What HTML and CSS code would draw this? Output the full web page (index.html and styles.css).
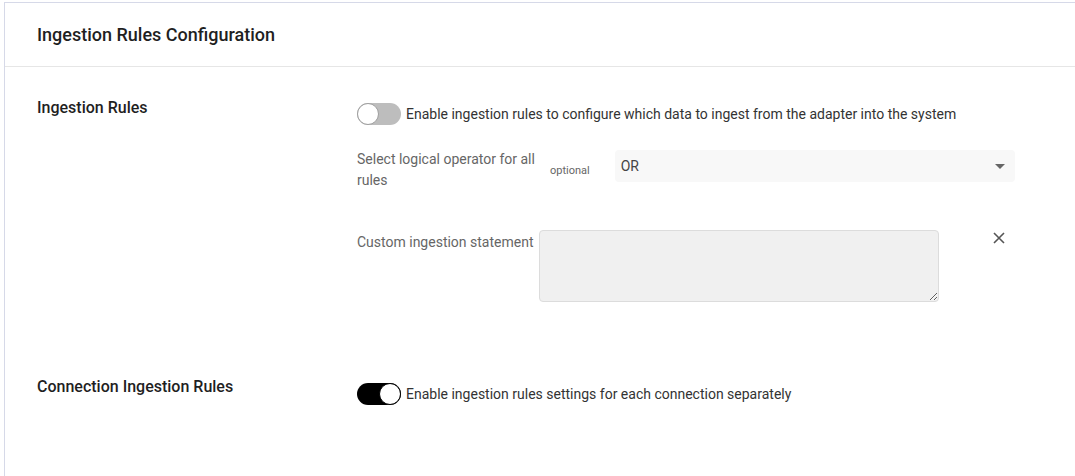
FILE: index.html
```html
<!DOCTYPE html>
<html lang="en">
<head>
<meta charset="utf-8">
<title>Ingestion Rules Configuration</title>
<link rel="stylesheet" href="styles.css">
</head>
<body>
<div class="page">
  <section class="card">
    <header class="card-header">
      <h2 class="card-title">Ingestion Rules Configuration</h2>
    </header>
    <div class="card-body">
      <div class="setting">
        <div class="setting-label">Ingestion Rules</div>
        <div class="setting-content">
          <label class="toggle-row">
            <span class="toggle"><span class="knob"></span></span>
            <span class="toggle-text">Enable ingestion rules to configure which data to ingest from the adapter into the system</span>
          </label>
          <div class="select-row">
            <span class="field-label select-label">Select logical operator for all rules</span>
            <span class="optional">optional</span>
            <div class="select">
              <span class="select-value">OR</span>
              <span class="caret"></span>
            </div>
          </div>
          <div class="custom-row">
            <span class="field-label custom-label">Custom ingestion statement</span>
            <textarea class="statement"></textarea>
            <button class="remove" type="button" aria-label="Remove">
              <svg width="12" height="12" viewBox="0 0 12 12"><path d="M1 1 L11 11 M11 1 L1 11" stroke="#555" stroke-width="1.6" fill="none"/></svg>
            </button>
          </div>
        </div>
      </div>
      <div class="setting setting-connection">
        <div class="setting-label">Connection Ingestion Rules</div>
        <div class="setting-content">
          <label class="toggle-row">
            <span class="toggle toggle-on"><span class="knob"></span></span>
            <span class="toggle-text">Enable ingestion rules settings for each connection separately</span>
          </label>
        </div>
      </div>
    </div>
  </section>
</div>
</body>
</html>
```

FILE: styles.css
```css
* { box-sizing: border-box; }
html, body { margin: 0; padding: 0; background: #fff; }
body { font-family: Roboto, "Noto Sans", sans-serif; color: #222; }

.page { padding: 2px 0 0 4px; height: 476px; overflow: hidden; }

.card {
  border-top: 1px solid #d6d9e8;
  border-left: 1px solid #d6d9e8;
  min-height: 474px;
  background: #fff;
}

.card-header {
  height: 64px;
  display: flex;
  align-items: center;
  padding-left: 32px;
  border-bottom: 1px solid #e6e6e6;
}
.card-title {
  margin: 0;
  font-size: 18px;
  font-weight: 500;
  color: #1f1f1f;
}

.card-body { padding: 29px 32px 0 32px; }

.setting {
  display: grid;
  grid-template-columns: 320px 1fr;
}
.setting-connection { margin-top: 73px; }

.setting-label {
  font-size: 16px;
  line-height: 24px;
  font-weight: 500;
  color: #1f1f1f;
}
.setting-content { padding-top: 7px; }
.setting-connection .setting-content { padding-top: 8px; }

.toggle-row {
  display: flex;
  align-items: center;
  height: 22px;
}
.toggle {
  position: relative;
  width: 44px;
  height: 22px;
  border-radius: 11px;
  background: #bdbdbd;
  flex: none;
}
.knob {
  position: absolute;
  top: 0;
  left: 0;
  width: 22px;
  height: 22px;
  border-radius: 50%;
  background: #fff;
  border: 1.5px solid #9e9e9e;
}
.toggle-on { background: #000; }
.toggle-on .knob { left: 22px; border-color: #000; }
.toggle-text {
  margin-left: 5px;
  font-size: 14px;
  color: #333;
}

.select-row {
  display: flex;
  align-items: flex-start;
  margin-top: 22px;
}
.field-label {
  font-size: 14px;
  line-height: 21px;
  color: #666;
}
.select-label { width: 190px; flex: none; margin-top: 2px; }
.optional {
  margin-left: 3px;
  margin-top: 17px;
  font-size: 11px;
  line-height: 13px;
  color: #666;
  flex: none;
}
.select {
  margin-left: 25px;
  margin-top: 3px;
  width: 400px;
  height: 32px;
  border-radius: 4px;
  background: #f8f8f8;
  display: flex;
  align-items: center;
  justify-content: space-between;
  padding: 0 10px 0 6px;
  flex: none;
}
.select-value { font-size: 14px; color: #444; }
.caret {
  width: 0;
  height: 0;
  border-left: 5px solid transparent;
  border-right: 5px solid transparent;
  border-top: 5px solid #666;
}

.custom-row {
  display: flex;
  align-items: flex-start;
  margin-top: 39px;
}
.custom-label { margin-top: 2px; }
.statement {
  margin: 0 0 0 5px;
  width: 400px;
  height: 72px;
  background: #f0f0f0;
  border: 1px solid #dcdcdc;
  border-radius: 4px;
  font-family: inherit;
  font-size: 14px;
  flex: none;
}
.remove {
  margin-left: 53px;
  margin-top: 1px;
  width: 14px;
  height: 14px;
  padding: 1px;
  border: 0;
  background: none;
  display: flex;
  align-items: center;
  justify-content: center;
  cursor: pointer;
}
```
